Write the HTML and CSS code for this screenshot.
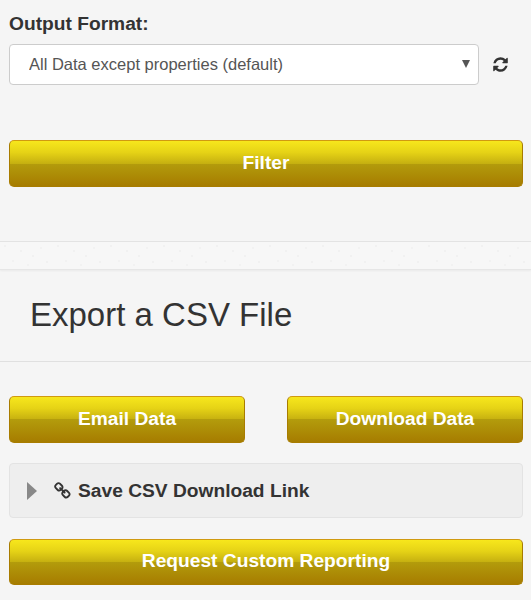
FILE: index.html
```html
<!DOCTYPE html>
<html lang="en">
<head>
  <meta charset="UTF-8">
  <meta name="viewport" content="width=device-width, initial-scale=1.0">
  <title>Export Data</title>
  <link rel="stylesheet" href="styles.css">
</head>
<body>

  <!-- Filter form -->
  <div class="filter-section">
    <label class="field-label" for="outputFormat">Output Format:</label>
    <div class="select-row">
      <div class="select-wrap">
        <select id="outputFormat">
          <option>All Data except properties (default)</option>
        </select>
      </div>
      <svg class="refresh-icon" viewBox="0 0 1792 1792" aria-hidden="true"><path d="M1639 1056q0 5-1 7-64 268-268 434.5t-478 166.5q-146 0-282.5-55t-243.5-157l-129 129q-19 19-45 19t-45-19-19-45v-448q0-26 19-45t45-19h448q26 0 45 19t19 45-19 45l-137 137q71 66 161 102t187 36q134 0 250-65t186-179q11-17 53-117 8-23 30-23h192q13 0 22.5 9.5t9.5 22.5zm25-800v448q0 26-19 45t-45 19h-448q-26 0-45-19t-19-45 19-45l138-138q-148-137-349-137-134 0-250 65t-186 179q-11 17-53 117-8 23-30 23h-199q-13 0-22.5-9.5t-9.5-22.5v-7q65-268 270-434.5t480-166.5q146 0 284 55.5t245 156.5l130-129q19-19 45-19t45 19 19 45z"/></svg>
    </div>
    <button type="button" class="btn btn-filter">Filter</button>
  </div>

  <div class="divider-band"></div>

  <!-- Export section -->
  <div class="export-section">
    <h2 class="export-title">Export a CSV File</h2>
    <div class="export-buttons">
      <button type="button" class="btn">Email Data</button>
      <button type="button" class="btn">Download Data</button>
    </div>
    <div class="save-link">
      <span class="caret"></span>
      <svg class="link-icon" viewBox="0 0 1792 1792" aria-hidden="true"><path d="M1456 1216q0-40-28-68l-208-208q-28-28-68-28-42 0-72 32 3 3 19 18.5t21.5 21.5 15 19 13 25.5 3.5 27.5q0 40-28 68t-68 28q-15 0-27.5-3.5t-25.5-13-19-15-21.5-21.5-18.5-19q-33 31-33 73 0 40 28 68l206 207q27 27 68 27 40 0 68-26l147-146q28-28 28-67zm-703-705q0-40-28-68l-206-207q-28-28-68-28-39 0-68 27l-147 146q-28 28-28 67 0 40 28 68l208 208q27 27 68 27 42 0 72-31-3-3-19-18.5t-21.5-21.5-15-19-13-25.5-3.5-27.5q0-40 28-68t68-28q15 0 27.5 3.5t25.5 13 19 15 21.5 21.5 18.5 19q33-31 33-73zm895 705q0 120-85 203l-147 146q-83 83-203 83-121 0-204-85l-206-207q-83-83-83-203 0-123 88-209l-88-88q-86 88-208 88-120 0-204-84l-208-208q-84-84-84-204t85-203l147-146q83-83 203-83 121 0 204 85l206 207q83 83 83 203 0 123-88 209l88 88q86-88 208-88 120 0 204 84l208 208q84 84 84 204z"/></svg>
      <span class="save-text">Save CSV Download Link</span>
    </div>
    <button type="button" class="btn btn-short">Request Custom Reporting</button>
  </div>

</body>
</html>
```

FILE: styles.css
```css
/* Global styling */
html, body { height: 600px; overflow: hidden; }
body { font-family: "Liberation Sans", Arial, sans-serif; margin: 0; padding: 0; background-color: #f5f5f5; color: #333; }

/* Buttons */
.btn {
  display: block;
  width: 100%;
  height: 47px;
  padding: 0 0 2px;
  font-family: inherit;
  font-size: 19.2px;
  font-weight: bold;
  color: #fff;
  border: 1px solid #a87c00;
  border-top-color: #d09a10;
  border-radius: 5px;
  background: linear-gradient(to bottom, #f7e71c 0%, #e6d316 25%, #c6b010 50%, #b39c0c 50%, #a67c00 100%);
  cursor: pointer;
}
.btn-short { height: 46px; }

/* Filter form */
.filter-section { padding: 14px 8px 0 9px; height: 241px; box-sizing: border-box; }
.field-label { display: block; font-size: 19.2px; font-weight: bold; line-height: 20px; margin-bottom: 10px; }
.select-row { display: flex; align-items: center; margin-bottom: 55px; }
.select-wrap { position: relative; width: 470px; height: 41px; }
.select-wrap::after {
  content: "";
  position: absolute;
  top: 16px;
  right: 9px;
  border-left: 4px solid transparent;
  border-right: 4px solid transparent;
  border-top: 8px solid #555;
}
select {
  display: block;
  width: 100%;
  height: 100%;
  padding: 0 19px 2px;
  font-family: inherit;
  font-size: 16.5px;
  color: #555;
  background-color: #fff;
  border: 1px solid #ccc;
  border-radius: 4px;
  appearance: none;
}
.refresh-icon { width: 17px; height: 17px; margin-left: 13px; fill: #333; }

/* Speckled band */
.divider-band {
  height: 27px;
  background-color: #f7f7f7;
  background-image:
    radial-gradient(circle at 5px 4px, #f1f1f1 1px, transparent 1.5px),
    radial-gradient(circle at 13px 19px, #f2f2f2 1px, transparent 1.5px),
    radial-gradient(circle at 21px 9px, #f1f1f1 1px, transparent 1.5px),
    radial-gradient(circle at 28px 23px, #f2f2f2 1px, transparent 1.5px),
    radial-gradient(circle at 33px 14px, #f1f1f1 1px, transparent 1.5px),
    radial-gradient(circle at 41px 6px, #f2f2f2 1px, transparent 1.5px),
    radial-gradient(circle at 47px 20px, #f1f1f1 1px, transparent 1.5px);
  background-size: 53px 27px;
  border-top: 1px solid #e3e3e3;
  border-bottom: 1px solid #e6e6e6;
  box-shadow: 0 1px 2px rgba(0, 0, 0, 0.05);
}

/* Export section */
.export-section { padding: 0 8px 0 9px; }
.export-title {
  margin: 0 -8px 34px -9px;
  padding: 25px 30px 0;
  height: 92px;
  box-sizing: border-box;
  font-size: 33px;
  font-weight: normal;
  line-height: 40px;
  border-bottom: 1px solid #e0e0e0;
}
.export-buttons { display: flex; justify-content: space-between; margin-bottom: 20px; }
.export-buttons .btn { width: 236px; }
.save-link {
  display: flex;
  align-items: center;
  height: 55px;
  box-sizing: border-box;
  padding-left: 17px;
  margin-bottom: 21px;
  background-color: #eee;
  border: 1px solid #e3e3e3;
  border-radius: 4px;
}
.caret {
  border-top: 9px solid transparent;
  border-bottom: 9px solid transparent;
  border-left: 10px solid #888;
  margin-right: 17px;
}
.link-icon { width: 18px; height: 18px; margin-right: 6px; fill: #333; }
.save-text { font-size: 19.2px; font-weight: bold; }
```
